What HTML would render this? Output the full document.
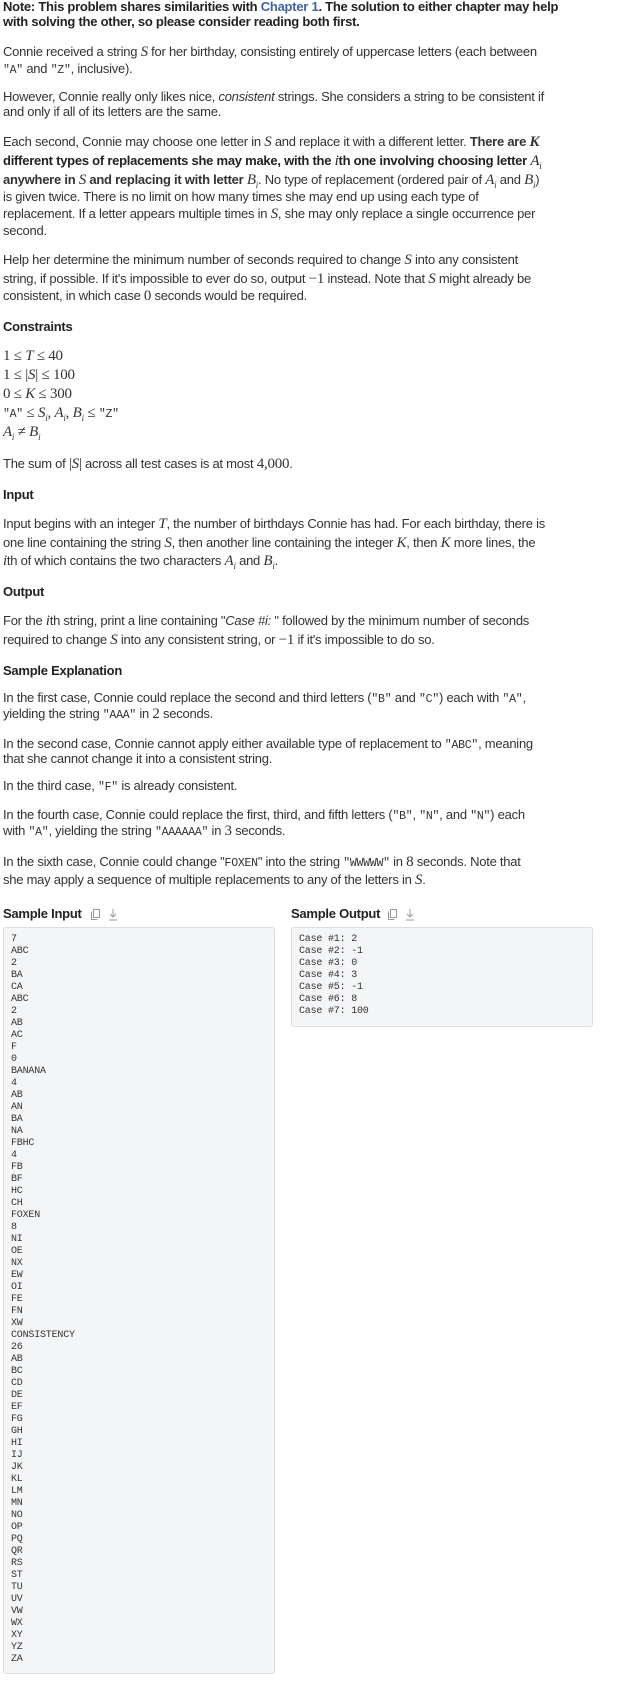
<!DOCTYPE html>
<html><head><meta charset="utf-8"><style>
body{margin:0;width:620px;height:1683px;background:#fff;position:relative;overflow:hidden}
.l{position:absolute;left:3px;white-space:nowrap;font-family:"Liberation Sans",sans-serif;font-size:13px;line-height:16px;color:#333;letter-spacing:-0.25px}
.b{font-weight:bold;color:#222}
.m{font-family:"Liberation Serif",serif;font-style:italic;font-size:15px}
.n{font-family:"Liberation Serif",serif;font-size:15px}
.c{font-family:"Liberation Mono",monospace;font-size:11.5px}
sub{font-size:9px;line-height:0}
a{color:#3f62a8;text-decoration:none}
.box{position:absolute;background:#f4f5f7;border:1px solid #dcdee2;border-radius:3px;box-sizing:border-box}
pre{margin:0;font-family:"Liberation Mono",monospace;font-size:10px;line-height:12px;color:#333;letter-spacing:-0.2px;position:absolute;left:7px;top:6px}
.ic{position:absolute}
</style></head><body>
<div class="l b" style="top:-1px">Note: This problem shares similarities with <a>Chapter 1</a>. The solution to either chapter may help</div>
<div class="l b" style="top:14px">with solving the other, so please consider reading both first.</div>

<div class="l" style="top:44px">Connie received a string <span class="m">S</span> for her birthday, consisting entirely of uppercase letters (each between</div>
<div class="l" style="top:61px"><span class="c">"A"</span> and <span class="c">"Z"</span>, inclusive).</div>

<div class="l" style="top:89px">However, Connie really only likes nice, <i>consistent</i> strings. She considers a string to be consistent if</div>
<div class="l" style="top:104px">and only if all of its letters are the same.</div>

<div class="l" style="top:134px">Each second, Connie may choose one letter in <span class="m">S</span> and replace it with a different letter. <b>There are <span class="m">K</span></b></div>
<div class="l b" style="top:153px">different types of replacements she may make, with the <span class="m" style="font-weight:normal">i</span>th one involving choosing letter <span class="m" style="font-weight:normal">A<sub>i</sub></span></div>
<div class="l" style="top:172px"><b>anywhere in <span class="m" style="font-weight:normal">S</span> and replacing it with letter <span class="m" style="font-weight:normal">B<sub>i</sub></span></b>. No type of replacement (ordered pair of <span class="m">A<sub>i</sub></span> and <span class="m">B<sub>i</sub></span>)</div>
<div class="l" style="top:189px">is given twice. There is no limit on how many times she may end up using each type of</div>
<div class="l" style="top:206px">replacement. If a letter appears multiple times in <span class="m">S</span>, she may only replace a single occurrence per</div>
<div class="l" style="top:223px">second.</div>

<div class="l" style="top:252px">Help her determine the minimum number of seconds required to change <span class="m">S</span> into any consistent</div>
<div class="l" style="top:271px">string, if possible. If it's impossible to ever do so, output <span class="n">−1</span> instead. Note that <span class="m">S</span> might already be</div>
<div class="l" style="top:288px">consistent, in which case <span class="n">0</span> seconds would be required.</div>

<div class="l b" style="top:319px">Constraints</div>
<div class="l n" style="top:348px">1 ≤ <i>T</i> ≤ 40</div>
<div class="l n" style="top:367px">1 ≤ |<i>S</i>| ≤ 100</div>
<div class="l n" style="top:386px">0 ≤ <i>K</i> ≤ 300</div>
<div class="l n" style="top:405px"><span class="c">"A"</span> ≤ <i>S<sub>i</sub></i>, <i>A<sub>i</sub></i>, <i>B<sub>i</sub></i> ≤ <span class="c">"Z"</span></div>
<div class="l n" style="top:424px"><i>A<sub>i</sub></i> ≠ <i>B<sub>i</sub></i></div>
<div class="l" style="top:456px">The sum of <span class="n">|<i>S</i>|</span> across all test cases is at most <span class="n">4,000</span>.</div>

<div class="l b" style="top:487px">Input</div>
<div class="l" style="top:516px">Input begins with an integer <span class="m">T</span>, the number of birthdays Connie has had. For each birthday, there is</div>
<div class="l" style="top:535px">one line containing the string <span class="m">S</span>, then another line containing the integer <span class="m">K</span>, then <span class="m">K</span> more lines, the</div>
<div class="l" style="top:553px"><span class="m">i</span>th of which contains the two characters <span class="m">A<sub>i</sub></span> and <span class="m">B<sub>i</sub></span>.</div>

<div class="l b" style="top:584px">Output</div>
<div class="l" style="top:613px">For the <span class="m">i</span>th string, print a line containing "<i>Case #i: </i>" followed by the minimum number of seconds</div>
<div class="l" style="top:632px">required to change <span class="m">S</span> into any consistent string, or <span class="n">−1</span> if it's impossible to do so.</div>

<div class="l b" style="top:663px">Sample Explanation</div>
<div class="l" style="top:690px">In the first case, Connie could replace the second and third letters (<span class="c">"B"</span> and <span class="c">"C"</span>) each with <span class="c">"A"</span>,</div>
<div class="l" style="top:706px">yielding the string <span class="c">"AAA"</span> in <span class="n">2</span> seconds.</div>
<div class="l" style="top:736px">In the second case, Connie cannot apply either available type of replacement to <span class="c">"ABC"</span>, meaning</div>
<div class="l" style="top:751px">that she cannot change it into a consistent string.</div>
<div class="l" style="top:778px">In the third case, <span class="c">"F"</span> is already consistent.</div>
<div class="l" style="top:807px">In the fourth case, Connie could replace the first, third, and fifth letters (<span class="c">"B"</span>, <span class="c">"N"</span>, and <span class="c">"N"</span>) each</div>
<div class="l" style="top:823px">with <span class="c">"A"</span>, yielding the string <span class="c">"AAAAAA"</span> in <span class="n">3</span> seconds.</div>
<div class="l" style="top:854px">In the sixth case, Connie could change "<span class="c">FOXEN</span>" into the string <span class="c">"WWWWW"</span> in <span class="n">8</span> seconds. Note that</div>
<div class="l" style="top:872px">she may apply a sequence of multiple replacements to any of the letters in <span class="m">S</span>.</div>

<div class="l b" style="top:906px">Sample Input</div>
<svg class="ic" style="left:90px;top:908px" width="30" height="13" viewBox="0 0 30 13" fill="none" stroke="#999" stroke-width="1"><rect x="3.5" y="1.5" width="6" height="8"/><path d="M1.5 3.5v8h6"/><path d="M23 1v8M20 6l3 3 3-3M19 12h8"/></svg>
<div class="l b" style="top:906px;left:291px">Sample Output</div>
<svg class="ic" style="left:387px;top:908px" width="30" height="13" viewBox="0 0 30 13" fill="none" stroke="#999" stroke-width="1"><rect x="3.5" y="1.5" width="6" height="8"/><path d="M1.5 3.5v8h6"/><path d="M23 1v8M20 6l3 3 3-3M19 12h8"/></svg>

<div class="box" style="left:3px;top:927px;width:272px;height:747px"><pre>7
ABC
2
BA
CA
ABC
2
AB
AC
F
0
BANANA
4
AB
AN
BA
NA
FBHC
4
FB
BF
HC
CH
FOXEN
8
NI
OE
NX
EW
OI
FE
FN
XW
CONSISTENCY
26
AB
BC
CD
DE
EF
FG
GH
HI
IJ
JK
KL
LM
MN
NO
OP
PQ
QR
RS
ST
TU
UV
VW
WX
XY
YZ
ZA</pre></div>
<div class="box" style="left:291px;top:927px;width:302px;height:100px"><pre>Case #1: 2
Case #2: -1
Case #3: 0
Case #4: 3
Case #5: -1
Case #6: 8
Case #7: 100</pre></div>
</body></html>
